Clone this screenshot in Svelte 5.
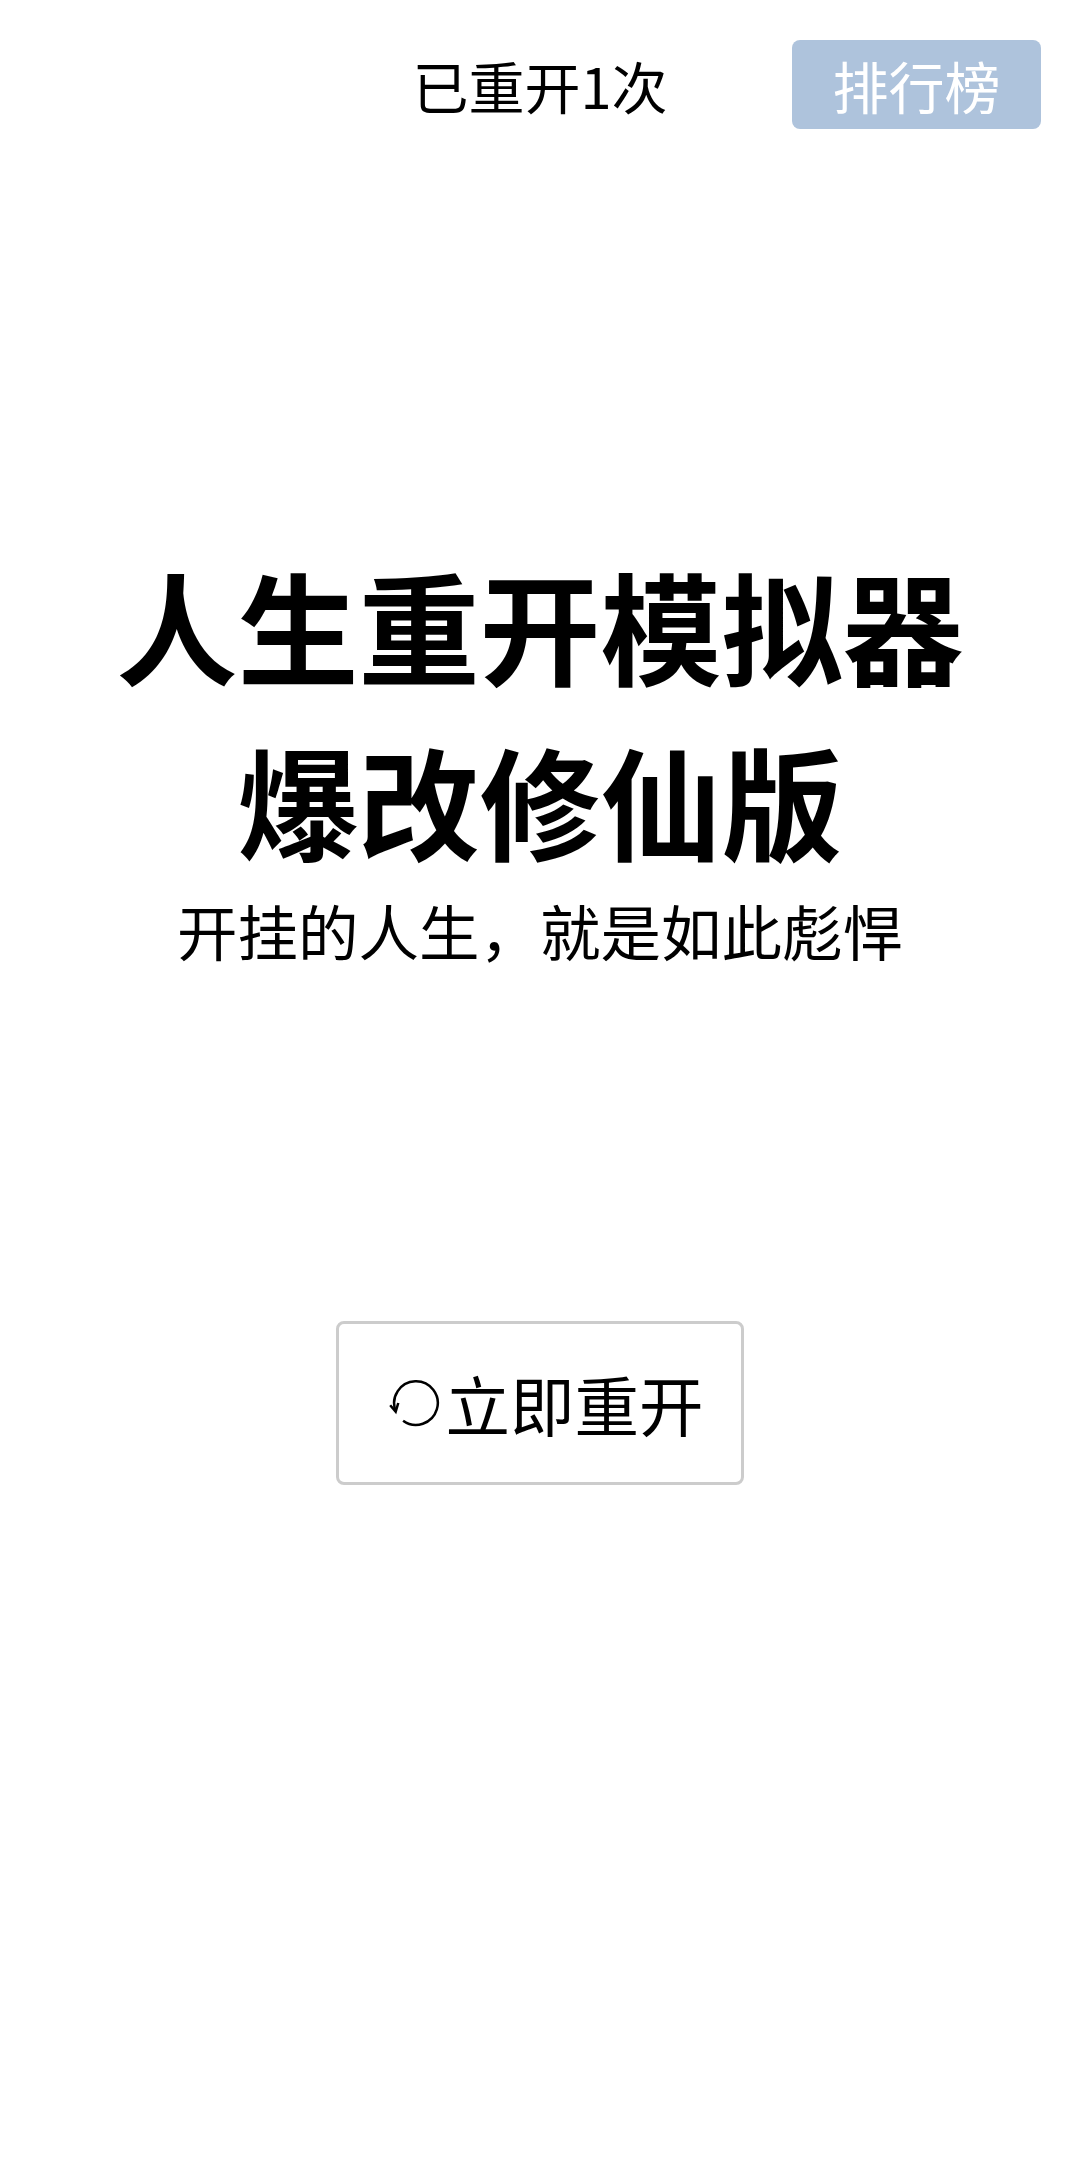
<script>
  let restartCount = 1;
</script>

<div class="page">
  <header class="top">
    <div class="count">已重开{restartCount}次</div>
    <button class="rank">排行榜</button>
  </header>

  <section class="title">
    <h1>人生重开模拟器<br />爆改修仙版</h1>
    <p>开挂的人生，就是如此彪悍</p>
  </section>

  <div class="action">
    <button class="restart">
      <svg viewBox="0 0 56 56" width="54" height="54" aria-hidden="true">
        <path d="M9 36.3 A22.6 22.6 0 1 1 16.7 46.3" fill="none" stroke="#000" stroke-width="2.6" />
        <path d="M3.3 30.3 L9 37 L11.7 28" fill="none" stroke="#000" stroke-width="2.6" />
      </svg>
      <span>立即重开</span>
    </button>
  </div>
</div>

<style>
  :global(body) {
    background: #fff;
  }

  .page {
    height: 2158px;
    font-family: "Noto Sans CJK SC", "Noto Sans", sans-serif;
    color: #000;
    overflow: hidden;
  }

  .top {
    display: grid;
    grid-template-columns: 1fr auto 1fr;
    align-items: center;
    padding: 40px 39px 0;
  }

  .count {
    grid-column: 2;
    font-size: 56px;
    line-height: 86px;
  }

  .rank {
    grid-column: 3;
    justify-self: end;
    width: 249px;
    height: 89px;
    padding: 0;
    border: none;
    border-radius: 8px;
    background: #aec3dc;
    color: #fff;
    font: inherit;
    font-size: 56px;
    line-height: 86px;
  }

  .title {
    margin-top: 407px;
    text-align: center;
  }

  h1 {
    margin: 0;
    font-size: 121px;
    font-weight: 700;
    line-height: 175px;
  }

  p {
    margin: 4px 0 0;
    font-size: 60.5px;
    line-height: 80px;
  }

  .action {
    display: flex;
    justify-content: center;
    margin-top: 351px;
  }

  .restart {
    display: flex;
    align-items: center;
    justify-content: center;
    gap: 4px;
    width: 408px;
    height: 164px;
    padding: 0 0 0 11px;
    border: 3px solid #ccc;
    border-radius: 8px;
    background: #fff;
    color: #000;
    font: inherit;
    font-size: 64.5px;
  }

  .restart svg {
    flex: none;
  }
</style>
